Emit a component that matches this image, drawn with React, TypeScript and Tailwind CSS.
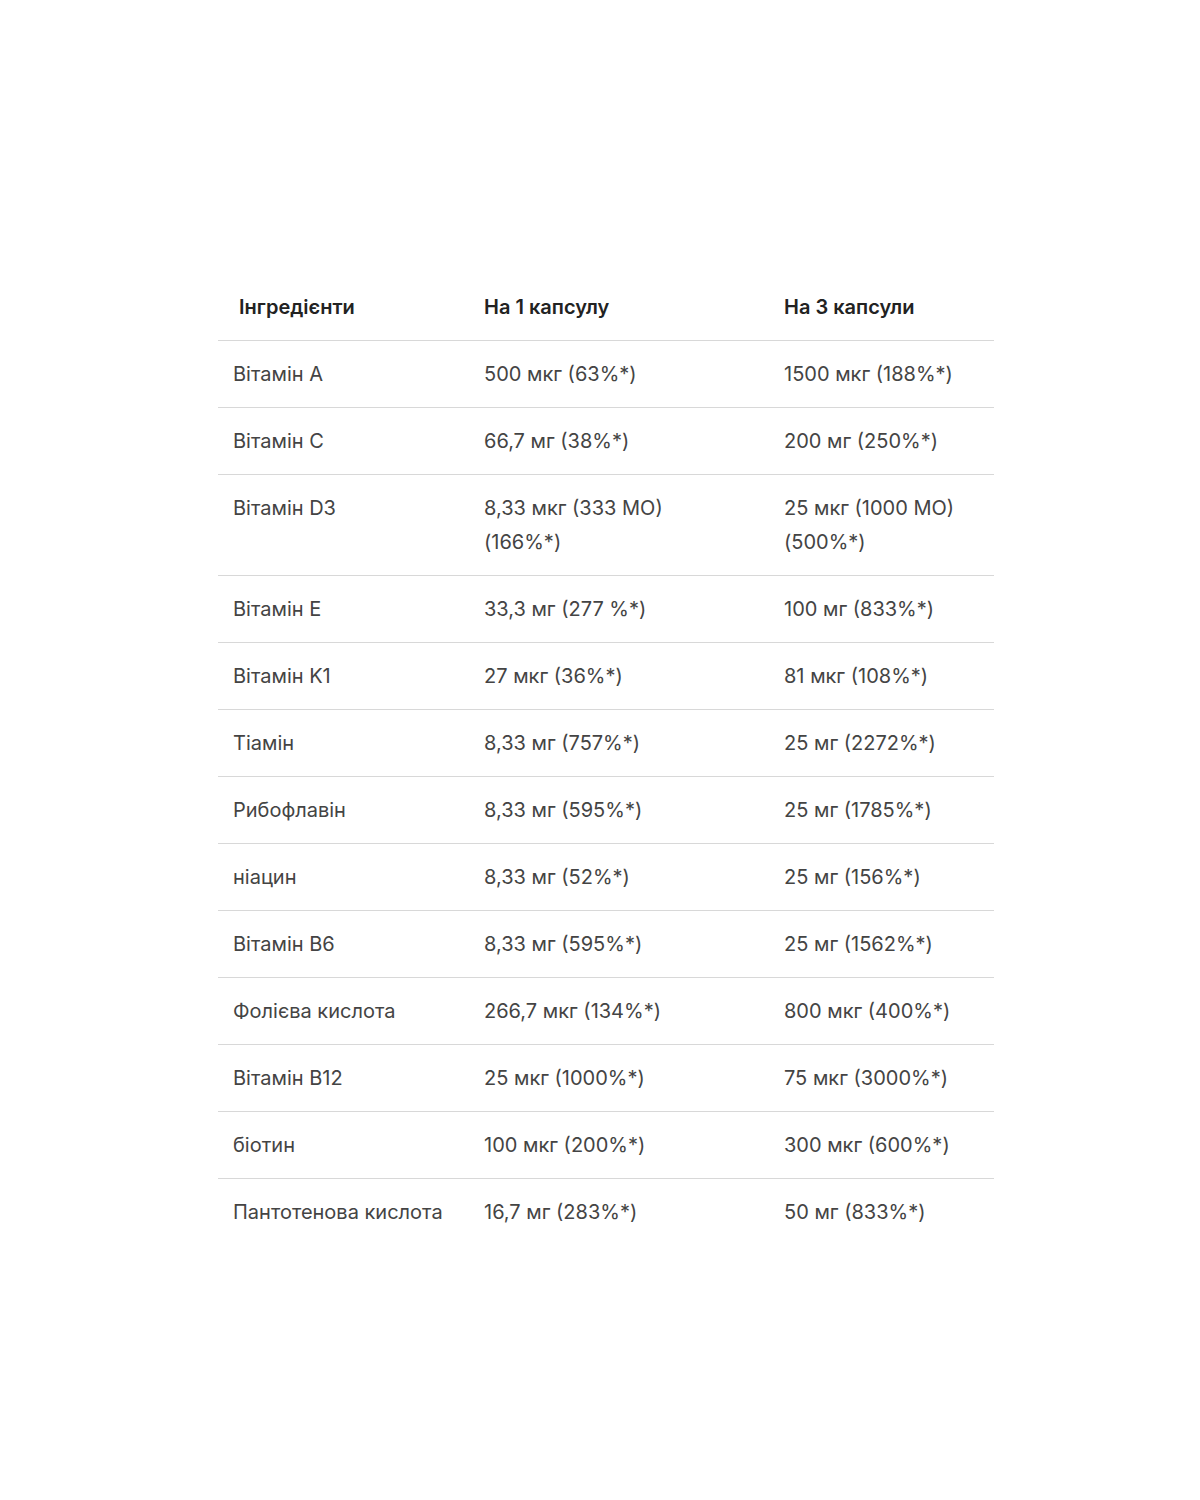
import React from 'react';

const rows: [string, string, string][] = [
  ['Вітамін A', '500 мкг (63%*)', '1500 мкг (188%*)'],
  ['Вітамін C', '66,7 мг (38%*)', '200 мг (250%*)'],
  ['Вітамін D3', '8,33 мкг (333 МО) (166%*)', '25 мкг (1000 МО) (500%*)'],
  ['Вітамін E', '33,3 мг (277 %*)', '100 мг (833%*)'],
  ['Вітамін K1', '27 мкг (36%*)', '81 мкг (108%*)'],
  ['Тіамін', '8,33 мг (757%*)', '25 мг (2272%*)'],
  ['Рибофлавін', '8,33 мг (595%*)', '25 мг (1785%*)'],
  ['ніацин', '8,33 мг (52%*)', '25 мг (156%*)'],
  ['Вітамін B6', '8,33 мг (595%*)', '25 мг (1562%*)'],
  ['Фолієва кислота', '266,7 мкг (134%*)', '800 мкг (400%*)'],
  ['Вітамін B12', '25 мкг (1000%*)', '75 мкг (3000%*)'],
  ['біотин', '100 мкг (200%*)', '300 мкг (600%*)'],
  ['Пантотенова кислота', '16,7 мг (283%*)', '50 мг (833%*)'],
];

export default function App() {
  return (
    <div className="min-h-[1500px] bg-white pt-[274px] font-['Inter',sans-serif]">
      <table className="ml-[218px] w-[776px] table-fixed border-collapse text-[20px] leading-[34px] text-[#444]">
        <colgroup>
          <col className="w-[251px]" />
          <col className="w-[300px]" />
          <col className="w-[225px]" />
        </colgroup>
        <thead>
          <tr className="border-b border-[#d8d8d8]">
            <th className="py-4 pl-[21px] text-left font-semibold text-[#222]">Інгредієнти</th>
            <th className="py-4 pl-[15px] text-left font-semibold text-[#222]">На 1 капсулу</th>
            <th className="py-4 pl-[15px] text-left font-semibold text-[#222]">На 3 капсули</th>
          </tr>
        </thead>
        <tbody>
          {rows.map((r, i) => (
            <tr key={i} className={i < rows.length - 1 ? 'border-b border-[#d8d8d8]' : ''}>
              <td className="py-4 pl-[15px] align-top whitespace-nowrap">{r[0]}</td>
              <td className="py-4 pl-[15px] pr-[50px] align-top">{r[1]}</td>
              <td className="py-4 pl-[15px] pr-4 align-top">{r[2]}</td>
            </tr>
          ))}
        </tbody>
      </table>
    </div>
  );
}
